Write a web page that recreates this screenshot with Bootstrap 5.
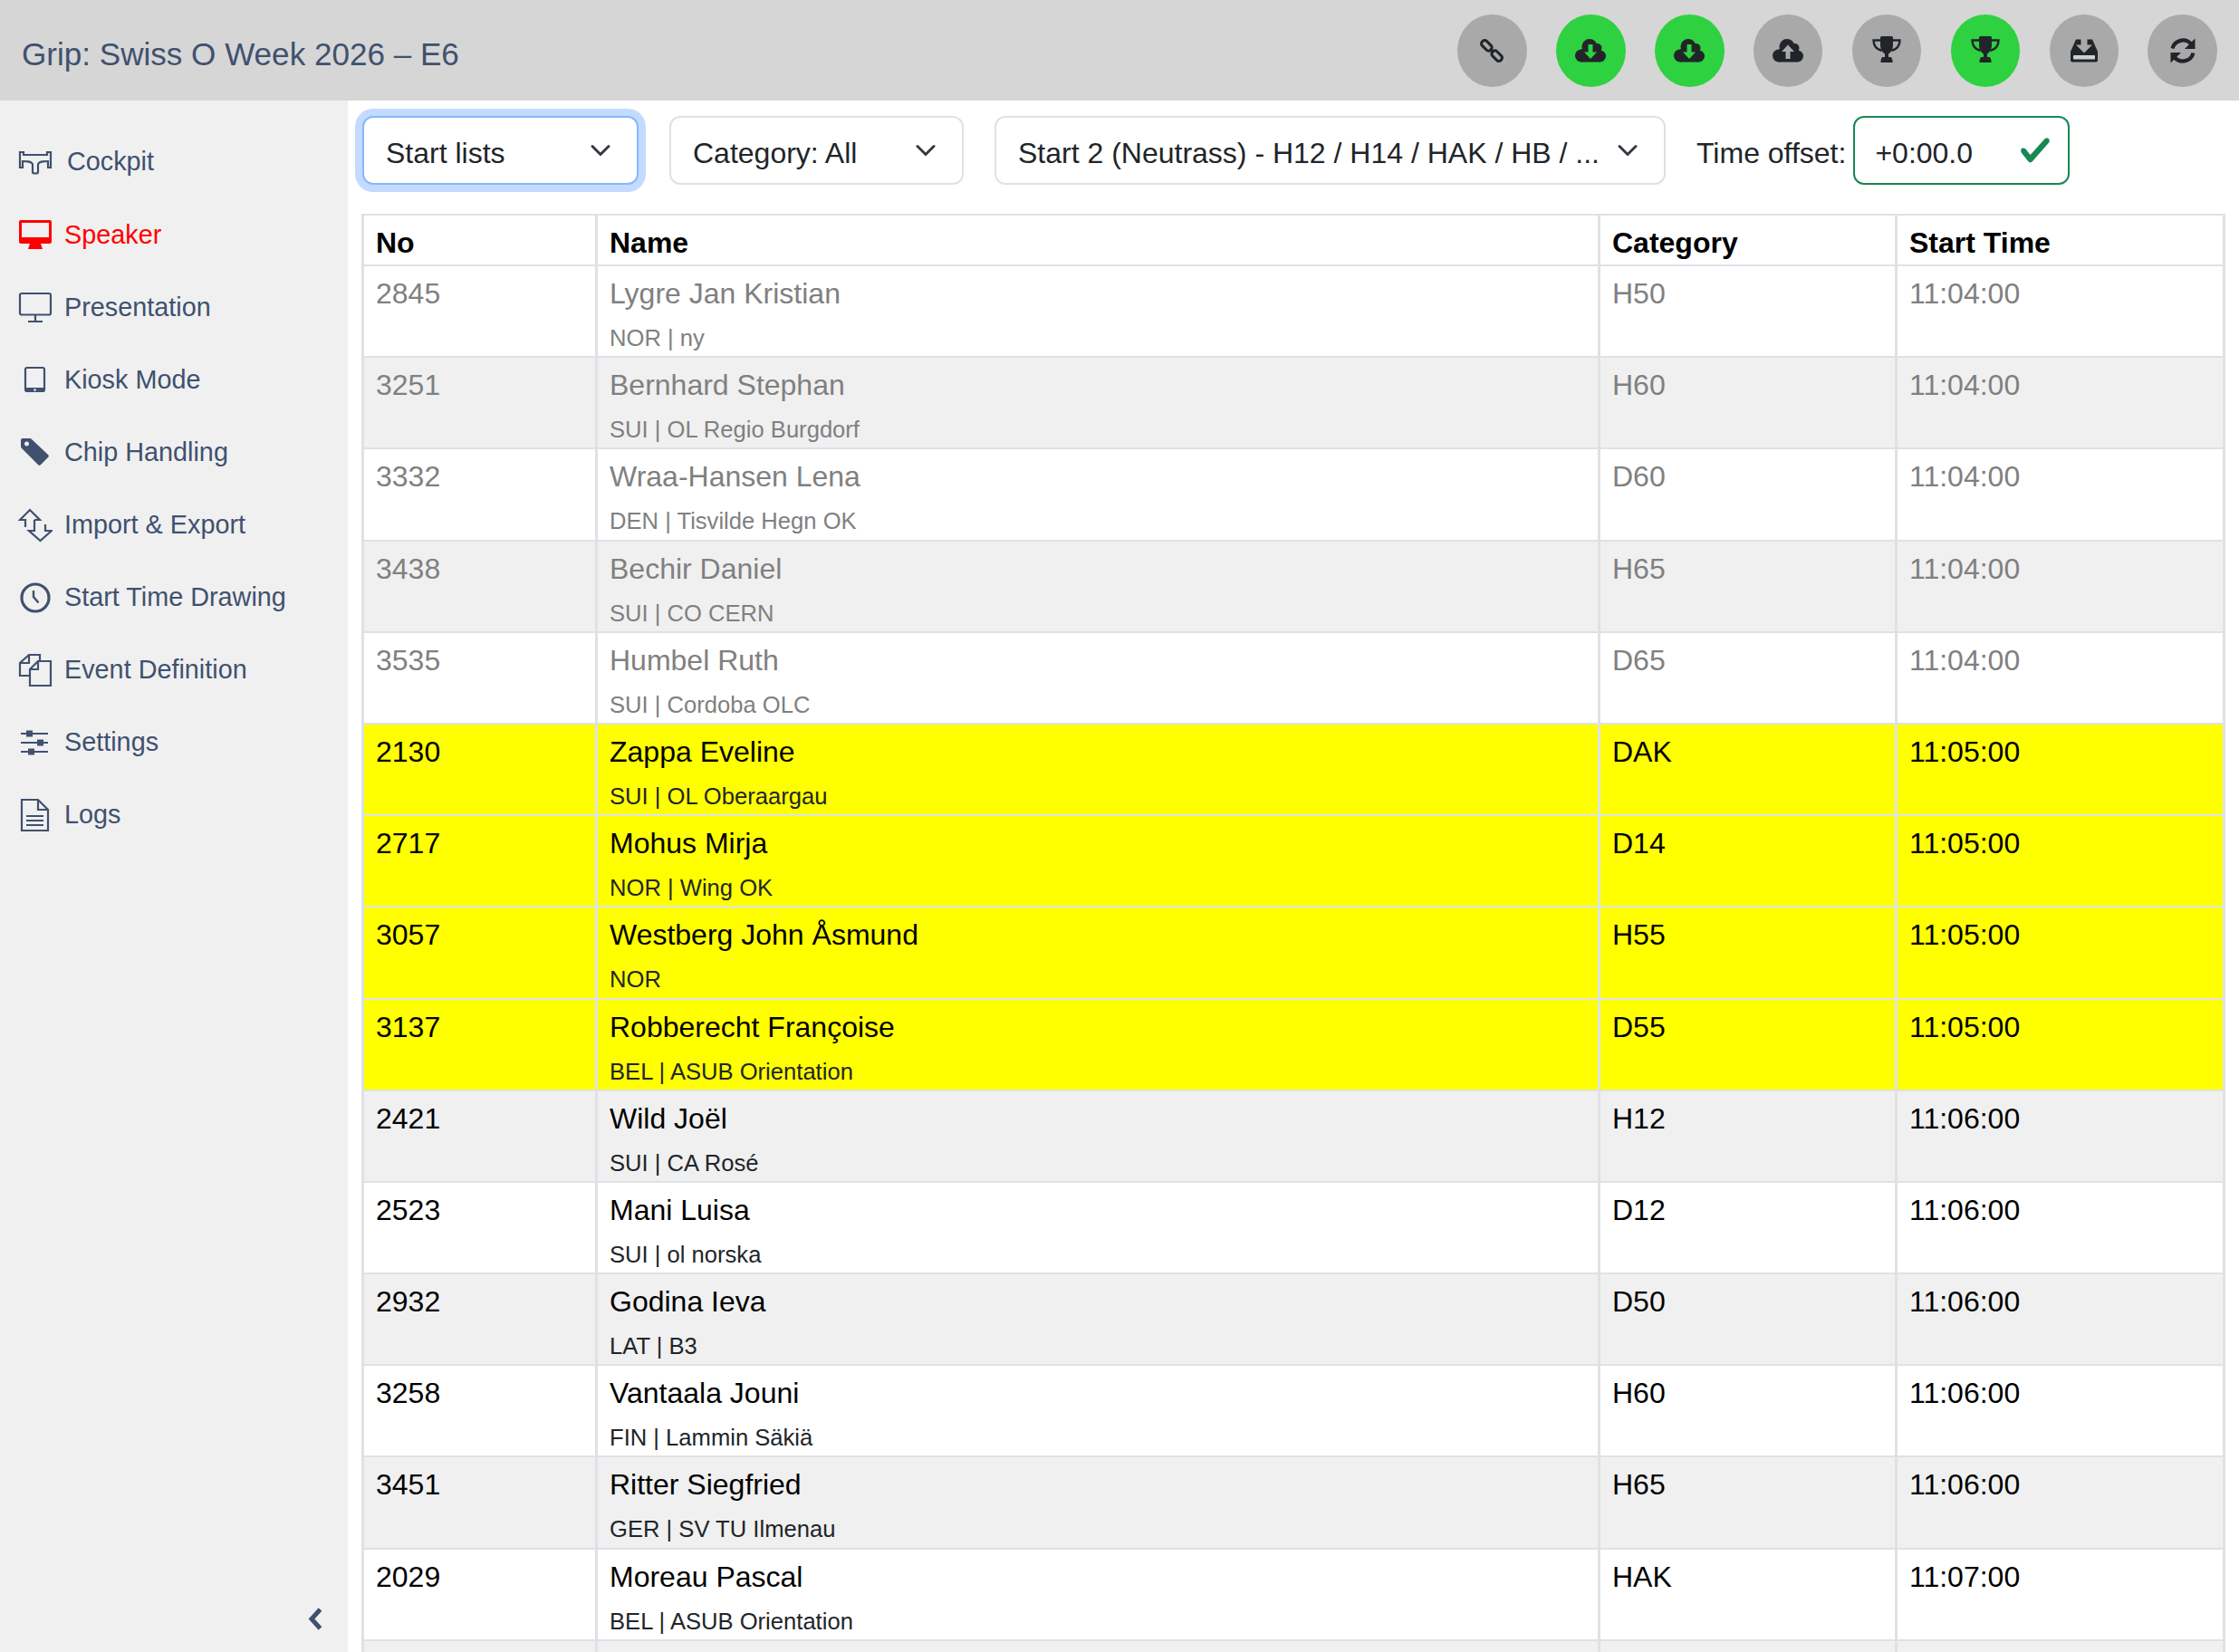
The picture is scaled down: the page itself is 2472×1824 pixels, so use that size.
<!DOCTYPE html>
<html lang="en">
<head>
  <meta charset="UTF-8" />
  <meta name="viewport" content="width=device-width, initial-scale=1.0" />
  <title>Grip: Swiss O Week 2026 – E6</title>
  <link href="https://cdn.jsdelivr.net/npm/bootstrap@5.3.3/dist/css/bootstrap.min.css" rel="stylesheet">
  <style>
    :root { --bs-border-width: 2px; --bs-border-radius: 12px; }
    html { font-size: 32px; }
    body {
      height: 100vh;
      overflow: hidden;
      font-family: "Liberation Sans", Arial, sans-serif;
      font-size: 32px;
    }
    .top-bar { height: 111px; background: #d6d6d6; padding: 0 24px; flex: none; }
    .app-title { color: #40516f; font-size: 35.1px; margin-top: 9px; }
    .round-btn {
      width: 76.6px;
      height: 80px;
      padding: 0;
      border: 0;
      background: #a9a9a9;
      --arrow: #a9a9a9;
    }
    .round-btn.is-on { background: #2ed140; --arrow: #2ed140; }
    .round-btn svg { width: 40px; height: 40px; }
    .top-btns { gap: 32.3px; }
    .side-col { width: 384px; flex: none; background: #f0f0f0; padding-top: 28px; }
    .side-link {
      height: 80.1px;
      padding-left: 20px;
      color: #40516f;
      font-size: 28.8px;
      text-decoration: none;
      gap: 13px;
    }
    .side-link.is-current { color: #ff0000; }
    .side-link svg { width: 38px; height: 38px; flex: none; }
    .side-link .sk { fill: none; stroke: currentColor; stroke-width: 2.2; }
    .side-link .fl { fill: currentColor; }
    .side-foot { padding: 0 27px 24px 0; }
    .main-col { padding: 17px 17px 0 14.5px; min-width: 0; overflow: hidden; }
    .filter-bar { gap: 34px; margin: 0 0 32px 1.5px; }
    .form-select { background-size: 32px 24px; background-position: right 24px center; flex: none; padding-top: 15px; padding-bottom: 9px; }
    .sel-list { width: 305px; border-color: #86b7fe; box-shadow: 0 0 0 8px #c2dbfe; }
    .sel-cat { width: 325px; }
    .sel-start { width: 741px; }
    .offset-label { margin-right: -26px; margin-top: 5px; }
    .offset-input { width: 239px; flex: none; padding-left: 22px; padding-top: 15px; padding-bottom: 9px; }
    .lst { table-layout: fixed; width: 2055px; margin: 0; border-collapse: collapse; }
    .lst > :not(caption) > * > * { border-width: 2px 3px; border-color: #dee2e6; color: #000; background: #fff; box-shadow: none; }
    .lst th { padding: 2px 13.5px 0; height: 56px; font-weight: 700; }
    .lst td { padding: 6px 13.5px 0; height: 101.2px; vertical-align: top; }
    .lst > tbody > tr:nth-of-type(even) > * { background: #f0f0f0; }
    .lst > tbody > tr.is-past > * { color: #808080; }
    .lst > tbody > tr.is-next > * { background: #ffff00; }
    .club { display: block; font-size: 25.6px; line-height: 38px; margin-top: 6px; color: #212529; }
    .is-past .club { color: #808080; }
    .w-no { width: 258px; }
    .w-name { width: 1107px; }
    .w-cat { width: 328px; }
    .w-time { width: 362px; }
  </style>
</head>
<body class="d-flex flex-column">

  <header class="top-bar d-flex align-items-center justify-content-between">
    <div class="app-title">Grip: Swiss O Week 2026 – E6</div>
    <div class="top-btns d-flex">
      <button type="button" class="round-btn rounded-circle d-flex align-items-center justify-content-center">
        <svg viewBox="0 0 40 40"><g fill="none" stroke="#212529" stroke-width="3" transform="rotate(45 20 20)"><rect x="5.500" y="16.500" width="13" height="7" rx="3"/><rect x="21.500" y="16.500" width="13" height="7" rx="3"/><path d="M17 20h6"/></g></svg>
      </button>
      <button type="button" class="round-btn is-on rounded-circle d-flex align-items-center justify-content-center">
        <svg viewBox="0 0 40 40"><g fill="#212529"><circle cx="19" cy="15.500" r="8.500"/><circle cx="27.500" cy="17" r="5"/><circle cx="10" cy="25.500" r="7"/><circle cx="30.500" cy="26" r="6.500"/><rect x="10" y="18" width="20" height="14.500"/></g><g fill="var(--arrow)"><rect x="17.500" y="13" width="5" height="9"/><path d="M13 21.500h14l-7 7.500z"/></g></svg>
      </button>
      <button type="button" class="round-btn is-on rounded-circle d-flex align-items-center justify-content-center">
        <svg viewBox="0 0 40 40"><g fill="#212529"><circle cx="19" cy="15.500" r="8.500"/><circle cx="27.500" cy="17" r="5"/><circle cx="10" cy="25.500" r="7"/><circle cx="30.500" cy="26" r="6.500"/><rect x="10" y="18" width="20" height="14.500"/></g><g fill="var(--arrow)"><rect x="17.500" y="13" width="5" height="9"/><path d="M13 21.500h14l-7 7.500z"/></g></svg>
      </button>
      <button type="button" class="round-btn rounded-circle d-flex align-items-center justify-content-center">
        <svg viewBox="0 0 40 40"><g fill="#212529"><circle cx="19" cy="15.500" r="8.500"/><circle cx="27.500" cy="17" r="5"/><circle cx="10" cy="25.500" r="7"/><circle cx="30.500" cy="26" r="6.500"/><rect x="10" y="18" width="20" height="14.500"/></g><g fill="var(--arrow)"><rect x="17.500" y="20" width="5" height="9"/><path d="M13 21l7-7.500 7 7.500z"/></g></svg>
      </button>
      <button type="button" class="round-btn rounded-circle d-flex align-items-center justify-content-center">
        <svg viewBox="0 0 40 40"><path fill="#212529" d="M13 5.500a1.500 1.500 0 0 1 1.500-1.500h11a1.500 1.500 0 0 1 1.500 1.500V14c0 5-3 8.500-5 9.500V27h3l1.500 3.500V33H13.500v-2.500L15 27h3v-3.500c-2-1-5-4.500-5-9.500z"/><path fill="none" stroke="#212529" stroke-width="2.400" d="M13 8.500H5.500c0 7 4 10 9 11.500M27 8.500h7.500c0 7-4 10-9 11.500"/></svg>
      </button>
      <button type="button" class="round-btn is-on rounded-circle d-flex align-items-center justify-content-center">
        <svg viewBox="0 0 40 40"><path fill="#212529" d="M13 5.500a1.500 1.500 0 0 1 1.500-1.500h11a1.500 1.500 0 0 1 1.500 1.500V14c0 5-3 8.500-5 9.500V27h3l1.500 3.500V33H13.500v-2.500L15 27h3v-3.500c-2-1-5-4.500-5-9.500z"/><path fill="none" stroke="#212529" stroke-width="2.400" d="M13 8.500H5.500c0 7 4 10 9 11.500M27 8.500h7.500c0 7-4 10-9 11.500"/></svg>
      </button>
      <button type="button" class="round-btn rounded-circle d-flex align-items-center justify-content-center">
        <svg viewBox="0 0 40 40"><path fill="#212529" d="M11 7.500h18l6 13.500v9.500a2 2 0 0 1-2 2H7a2 2 0 0 1-2-2V21z"/><path fill="var(--arrow)" d="M16.500 6h7v7.500h5.500l-9 9-9-9h5.500z"/><rect x="8" y="25" width="24" height="4.500" rx="1" fill="#cfcfcf"/></svg>
      </button>
      <button type="button" class="round-btn rounded-circle d-flex align-items-center justify-content-center">
        <svg viewBox="0 0 40 40"><g id="half"><path fill="none" stroke="#212529" stroke-width="4.200" d="M8.500 17.500A12 12 0 0 1 29 12.500"/><path fill="#212529" d="M33.500 6.500v11.500H22z"/></g><use href="#half" transform="rotate(180 20 20)"/></svg>
      </button>
    </div>
  </header>

  <div class="d-flex flex-grow-1" style="min-height:0">
    <nav class="side-col d-flex flex-column">
      <a href="#" class="side-link d-flex align-items-center" style="gap:16px">
        <svg viewBox="0 0 38 38"><path class="sk" d="M2 8h4v3h26V8h4v17h-3v-7c-5 0-9 0-11 3v9c0 2-6 2-6 0v-9c-2-3-6-3-11-3v7H2z"/></svg>
        <span>Cockpit</span>
      </a>
      <a href="#" class="side-link is-current d-flex align-items-center">
        <svg viewBox="0 0 38 38"><path class="fl" d="M3 3h32a2 2 0 0 1 2 2v22a2 2 0 0 1-2 2H25l2 6H11l2-6H3a2 2 0 0 1-2-2V5a2 2 0 0 1 2-2zm1 3v16h30V6z" fill-rule="evenodd"/></svg>
        <span>Speaker</span>
      </a>
      <a href="#" class="side-link d-flex align-items-center">
        <svg viewBox="0 0 38 38"><rect class="sk" x="2" y="4" width="34" height="23.500" rx="2"/><path class="sk" d="M19 28v6M11 35h16"/></svg>
        <span>Presentation</span>
      </a>
      <a href="#" class="side-link d-flex align-items-center">
        <svg viewBox="0 0 38 38"><rect class="sk" x="8" y="6" width="21" height="26" rx="2"/><rect class="fl" x="8" y="28" width="21" height="5"/><circle cx="18.500" cy="30.500" r="1.300" fill="#f0f0f0"/></svg>
        <span>Kiosk Mode</span>
      </a>
      <a href="#" class="side-link d-flex align-items-center">
        <svg viewBox="0 0 38 38"><path class="fl" fill-rule="evenodd" d="M3 6a2 2 0 0 1 2-2h8a3 3 0 0 1 2 1l18 17a2 2 0 0 1 0 3l-8 8a2 2 0 0 1-3 0L4 15a3 3 0 0 1-1-2zm6.500 1.500a2.500 2.500 0 1 0 .01 0z"/></svg>
        <span>Chip Handling</span>
      </a>
      <a href="#" class="side-link d-flex align-items-center">
        <svg viewBox="0 0 38 38"><path class="sk" d="M8 21v-8H2L13 2l11 11h-6"/><path class="sk" d="M18 13v12h-6l12.500 11L37 25h-7v-7"/></svg>
        <span>Import &amp; Export</span>
      </a>
      <a href="#" class="side-link d-flex align-items-center">
        <svg viewBox="0 0 38 38"><circle class="sk" cx="19" cy="19" r="15" style="stroke-width:3.200"/><path class="sk" d="M17 11v7l5.500 6.500" style="stroke-width:2.400"/></svg>
        <span>Start Time Drawing</span>
      </a>
      <a href="#" class="side-link d-flex align-items-center">
        <svg viewBox="0 0 38 38"><path class="sk" d="M24 9V2H12L2 11v14h11M12 2v9H2"/><path class="sk" d="M36 9H22l-9 9v18h23zM22 9v9h-9"/></svg>
        <span>Event Definition</span>
      </a>
      <a href="#" class="side-link d-flex align-items-center">
        <svg viewBox="0 0 38 38"><path class="sk" d="M3 9h30M3 19h30M3 29h30" style="stroke-width:1.800"/><rect class="fl" x="9" y="5.500" width="7" height="7"/><rect class="fl" x="21" y="15.500" width="7" height="7"/><rect class="fl" x="11" y="25.500" width="7" height="7"/></svg>
        <span>Settings</span>
      </a>
      <a href="#" class="side-link d-flex align-items-center">
        <svg viewBox="0 0 38 38"><path class="sk" d="M4 2h18l11 11v23H4zM22 2v11h11"/><path class="sk" d="M9 20h19M9 25h19M9 30h19" style="stroke-width:1.800"/></svg>
        <span>Logs</span>
      </a>
      <div class="side-foot mt-auto d-flex justify-content-end">
        <svg width="18" height="25" viewBox="0 0 18 25"><path d="M14.500 2 5 12.500 14.500 23" fill="none" stroke="#40516f" stroke-width="5"/></svg>
      </div>
    </nav>

    <main class="main-col flex-grow-1">
      <form class="filter-bar d-flex align-items-center">
        <select class="form-select sel-list"><option>Start lists</option></select>
        <select class="form-select sel-cat"><option>Category: All</option></select>
        <select class="form-select sel-start"><option>Start 2 (Neutrass) - H12 / H14 / HAK / HB / ...</option></select>
        <label class="offset-label" for="timeOffset">Time offset:</label>
        <input type="text" class="form-control is-valid offset-input" id="timeOffset" value="+0:00.0">
      </form>

      <table class="table table-bordered lst">
        <colgroup>
          <col class="w-no"><col class="w-name"><col class="w-cat"><col class="w-time">
        </colgroup>
        <thead>
          <tr><th>No</th><th>Name</th><th>Category</th><th>Start Time</th></tr>
        </thead>
        <tbody>
          <tr class="is-past"><td>2845</td><td>Lygre Jan Kristian<span class="club">NOR | ny</span></td><td>H50</td><td>11:04:00</td></tr>
          <tr class="is-past"><td>3251</td><td>Bernhard Stephan<span class="club">SUI | OL Regio Burgdorf</span></td><td>H60</td><td>11:04:00</td></tr>
          <tr class="is-past"><td>3332</td><td>Wraa-Hansen Lena<span class="club">DEN | Tisvilde Hegn OK</span></td><td>D60</td><td>11:04:00</td></tr>
          <tr class="is-past"><td>3438</td><td>Bechir Daniel<span class="club">SUI | CO CERN</span></td><td>H65</td><td>11:04:00</td></tr>
          <tr class="is-past"><td>3535</td><td>Humbel Ruth<span class="club">SUI | Cordoba OLC</span></td><td>D65</td><td>11:04:00</td></tr>
          <tr class="is-next"><td>2130</td><td>Zappa Eveline<span class="club">SUI | OL Oberaargau</span></td><td>DAK</td><td>11:05:00</td></tr>
          <tr class="is-next"><td>2717</td><td>Mohus Mirja<span class="club">NOR | Wing OK</span></td><td>D14</td><td>11:05:00</td></tr>
          <tr class="is-next"><td>3057</td><td>Westberg John Åsmund<span class="club">NOR</span></td><td>H55</td><td>11:05:00</td></tr>
          <tr class="is-next"><td>3137</td><td>Robberecht Françoise<span class="club">BEL | ASUB Orientation</span></td><td>D55</td><td>11:05:00</td></tr>
          <tr><td>2421</td><td>Wild Joël<span class="club">SUI | CA Rosé</span></td><td>H12</td><td>11:06:00</td></tr>
          <tr><td>2523</td><td>Mani Luisa<span class="club">SUI | ol norska</span></td><td>D12</td><td>11:06:00</td></tr>
          <tr><td>2932</td><td>Godina Ieva<span class="club">LAT | B3</span></td><td>D50</td><td>11:06:00</td></tr>
          <tr><td>3258</td><td>Vantaala Jouni<span class="club">FIN | Lammin Säkiä</span></td><td>H60</td><td>11:06:00</td></tr>
          <tr><td>3451</td><td>Ritter Siegfried<span class="club">GER | SV TU Ilmenau</span></td><td>H65</td><td>11:06:00</td></tr>
          <tr><td>2029</td><td>Moreau Pascal<span class="club">BEL | ASUB Orientation</span></td><td>HAK</td><td>11:07:00</td></tr>
          <tr><td>&nbsp;</td><td>&nbsp;</td><td>&nbsp;</td><td>&nbsp;</td></tr>
        </tbody>
      </table>
    </main>
  </div>

  <script src="https://cdn.jsdelivr.net/npm/bootstrap@5.3.3/dist/js/bootstrap.bundle.min.js"></script>
</body>
</html>
